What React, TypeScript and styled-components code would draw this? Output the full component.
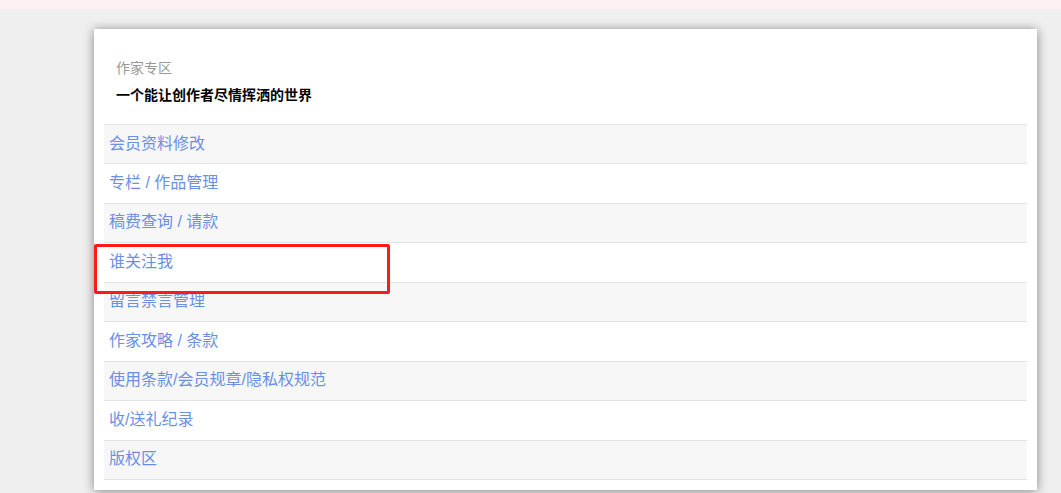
import React from "react";
import styled, { createGlobalStyle } from "styled-components";

const GlobalStyle = createGlobalStyle`
  html, body {
    margin: 0;
    padding: 0;
    background: #efefef;
    font-family: "Liberation Sans", "Noto Sans CJK SC", sans-serif;
  }
`;

const Page = styled.div`
  position: relative;
  width: 1061px;
  height: 493px;
  overflow: hidden;
  background: #efefef;
`;

const TopBar = styled.div`
  height: 9px;
  background: #fff1f1;
`;

const Card = styled.section`
  margin: 20px 0 0 94px;
  width: 943px;
  background: #fff;
  box-shadow: 0 1px 10px rgba(0, 0, 0, 0.45);
  padding: 0 10px 10px;
  box-sizing: border-box;
`;

const Header = styled.header`
  height: 95px;
  box-sizing: border-box;
  padding: 30px 12px 0;
  display: flex;
  flex-direction: column;
  gap: 7px;
`;

const Title = styled.div`
  font-size: 14px;
  line-height: 19px;
  color: #999;
`;

const Slogan = styled.div`
  font-size: 14px;
  line-height: 20px;
  font-weight: bold;
  color: #000;
`;

const List = styled.ul`
  list-style: none;
  margin: 0;
  padding: 0;
  border-bottom: 1px solid #e3e3e3;
`;

const Row = styled.li<{ $alt: boolean }>`
  border-top: 1px solid #e3e3e3;
  background: ${(p) => (p.$alt ? "#f7f7f7" : "#fff")};
  padding: 9.5px 5px 10.5px;
  font-size: 16px;
  line-height: 18.44px;
  color: #6b8fe6;
`;

const Highlight = styled.div`
  position: absolute;
  left: 94px;
  top: 244px;
  width: 296px;
  height: 50px;
  box-sizing: border-box;
  border: 3px solid #ff1a1a;
  border-radius: 2px;
  pointer-events: none;
`;

const items = [
  "会员资料修改",
  "专栏 / 作品管理",
  "稿费查询 / 请款",
  "谁关注我",
  "留言禁言管理",
  "作家攻略 / 条款",
  "使用条款/会员规章/隐私权规范",
  "收/送礼纪录",
  "版权区",
];

export default function App() {
  return (
    <Page>
      <GlobalStyle />
      <TopBar />
      <Card>
        <Header>
          <Title>作家专区</Title>
          <Slogan>一个能让创作者尽情挥洒的世界</Slogan>
        </Header>
        <List>
          {items.map((t, i) => (
            <Row key={t} $alt={i % 2 === 0}>
              {t}
            </Row>
          ))}
        </List>
      </Card>
      <Highlight />
    </Page>
  );
}
